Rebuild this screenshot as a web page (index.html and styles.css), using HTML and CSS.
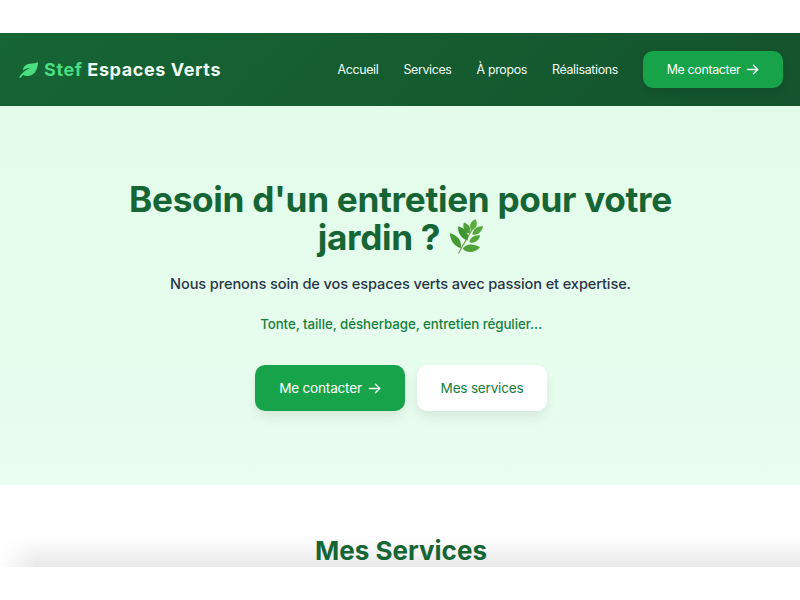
FILE: index.html
```html
<!DOCTYPE html>
<html lang="fr">
<head>
    <meta charset="UTF-8">
    <meta name="viewport" content="width=device-width, initial-scale=1.0">
    <title>Stef Espaces Verts</title>
    <link rel="stylesheet" href="styles.css">
</head>
<body>
    <div class="page">
        <header class="site-header">
            <a class="logo" href="#">
                <svg class="logo-leaf" viewBox="0 0 24 20" fill="#4ade80"><path d="M24 0C22 2 18 1.500 13.500 2.200 8.500 3 5 6 5 10.500 7.500 8.500 11 7.300 14 7.500 9 9.500 4 13.500 0 19L2 20C3 18.500 4 17 5.500 16.200 8 17.800 12 18 15.500 16.500 21.500 14 24 7 24 0Z"/></svg>
                <span class="logo-text"><span class="logo-first">Stef</span> Espaces Verts</span>
            </a>
            <nav class="site-nav">
                <a href="#">Accueil</a>
                <a href="#">Services</a>
                <a href="#">À propos</a>
                <a href="#">Réalisations</a>
                <a class="btn btn-green btn-nav" href="#">Me contacter
                    <svg class="arrow" viewBox="0 0 14 14" fill="none" stroke="currentColor" stroke-width="1.500" stroke-linecap="round" stroke-linejoin="round"><path d="M1.500 7h11"/><path d="M8 2.500 12.500 7 8 11.500"/></svg>
                </a>
            </nav>
        </header>

        <section class="hero">
            <h1>Besoin d'un entretien pour votre jardin ?
                <svg class="herb" viewBox="0 0 34 36">
                    <path d="M9 35C12 29 17 21 24 9" fill="none" stroke="#7aa04a" stroke-width="1.200" stroke-linecap="round"/>
                    <path d="M22 11.500C19 7 21 3 26 0 29 4 28 10 22 11.500Z" fill="#5cab40"/>
                    <path d="M20 15C14.500 13.500 12.500 8 14.500 3.500 19.500 5.500 23 10 20 15Z" fill="#4f9f38"/>
                    <path d="M23 16C23.500 10.500 28 7 34 7.500 33 13 28.500 17.500 23 16Z" fill="#58a83d"/>
                    <path d="M18 22C11.500 20 7.500 14 8.500 7.500 15.500 9.500 20.500 15 18 22Z" fill="#3f9532"/>
                    <path d="M20 24C20.500 19.500 25 16 31 17 30 22 25.500 25.500 20 24Z" fill="#54a63b"/>
                    <path d="M11 30C4.500 28.500 0 22 0 14.500 7 16.500 13 22.500 11 30Z" fill="#459a34"/>
                    <path d="M13 30.500C16 25.500 23.500 24.500 31 29 26 35 17.500 35.500 13 30.500Z" fill="#4fa238"/>
                </svg>
            </h1>
            <p class="hero-lead">Nous prenons soin de vos espaces verts avec passion et expertise.</p>
            <p class="hero-tasks">Tonte, taille, désherbage, entretien régulier...</p>
            <div class="hero-actions">
                <a class="btn btn-green btn-large" href="#">Me contacter
                    <svg class="arrow" viewBox="0 0 14 14" fill="none" stroke="currentColor" stroke-width="1.500" stroke-linecap="round" stroke-linejoin="round"><path d="M1.500 7h11"/><path d="M8 2.500 12.500 7 8 11.500"/></svg>
                </a>
                <a class="btn btn-white btn-large" href="#">Mes services</a>
            </div>
        </section>

        <section class="services">
            <h2>Mes Services</h2>
        </section>
    </div>
</body>
</html>
```

FILE: styles.css
```css
* {
    box-sizing: border-box;
}
body {
    font-family: 'Inter', 'Liberation Sans', sans-serif;
    margin: 0;
    padding: 33px 0;
    background: white;
    overflow: hidden;
}
a {
    text-decoration: none;
    color: inherit;
}
.page {
    height: 534px;
    overflow: hidden;
}
.site-header {
    height: 73px;
    padding: 0 17px 0 19px;
    display: flex;
    align-items: center;
    justify-content: space-between;
    background: linear-gradient(135deg, #166534, #14532d);
}
.logo {
    display: flex;
    align-items: center;
    gap: 6px;
    font-size: 18px;
    font-weight: 700;
    letter-spacing: 0.6px;
    color: #f0fdf4;
}
.logo-leaf {
    width: 19px;
    height: 16px;
}
.logo-first {
    color: #4ade80;
}
.site-nav {
    display: flex;
    align-items: center;
    gap: 25px;
    font-size: 12.400px;
    letter-spacing: -0.33px;
    font-weight: 400;
    color: #f0fdf4;
}
.btn {
    display: flex;
    align-items: center;
    justify-content: center;
    gap: 6px;
    border-radius: 10px;
}
.btn-green {
    background-color: #16a34a;
    color: white;
}
.btn-white {
    background-color: white;
    color: #15803d;
}
.btn-nav {
    width: 140px;
    height: 37px;
    box-shadow: 0 4px 8px rgba(0, 0, 0, 0.1);
}
.btn-large {
    height: 46px;
    font-size: 13.600px;
    letter-spacing: -0.22px;
    box-shadow: 0 6px 12px rgba(0, 0, 0, 0.08);
}
.arrow {
    width: 13px;
    height: 13px;
}
.hero {
    height: 379px;
    padding-top: 74px;
    background: linear-gradient(to bottom, #e2fce9, #e9fdf0);
    text-align: center;
}
.hero h1 {
    width: 600px;
    margin: 0 auto 16px;
    padding-left: 1px;
    font-size: 35.200px;
    letter-spacing: -0.32px;
    line-height: 38px;
    font-weight: 700;
    color: #166534;
}
.herb {
    width: 33px;
    height: 35px;
    margin: -10px 0 0 2px;
    vertical-align: -4px;
}
.hero-lead {
    margin: 0 0 16px;
    padding-left: 1px;
    font-size: 14.600px;
    letter-spacing: -0.12px;
    line-height: 24px;
    font-weight: 450;
    color: #283548;
}
.hero-tasks {
    margin: 0 0 29px;
    padding-left: 2px;
    font-size: 13.300px;
    letter-spacing: -0.06px;
    line-height: 24px;
    font-weight: 450;
    color: #15803d;
}
.hero-actions {
    display: flex;
    justify-content: center;
    gap: 12px;
    padding-left: 2px;
}
.hero-actions .btn-green {
    width: 150px;
}
.hero-actions .btn-white {
    width: 130px;
}
.services {
    height: 82px;
    padding: 50px 0 0 2px;
    position: relative;
    text-align: center;
}
.services::after {
    content: "";
    position: absolute;
    left: 0;
    right: 0;
    bottom: 0;
    height: 30px;
    background: linear-gradient(to bottom, rgba(0, 0, 0, 0), rgba(0, 0, 0, 0.09));
    -webkit-mask-image: linear-gradient(to right, transparent, black 36px);
    mask-image: linear-gradient(to right, transparent, black 36px);
}
.services h2 {
    margin: 0;
    font-size: 26px;
    line-height: 32px;
    font-weight: 700;
    color: #166534;
    position: relative;
    z-index: 1;
}
```
